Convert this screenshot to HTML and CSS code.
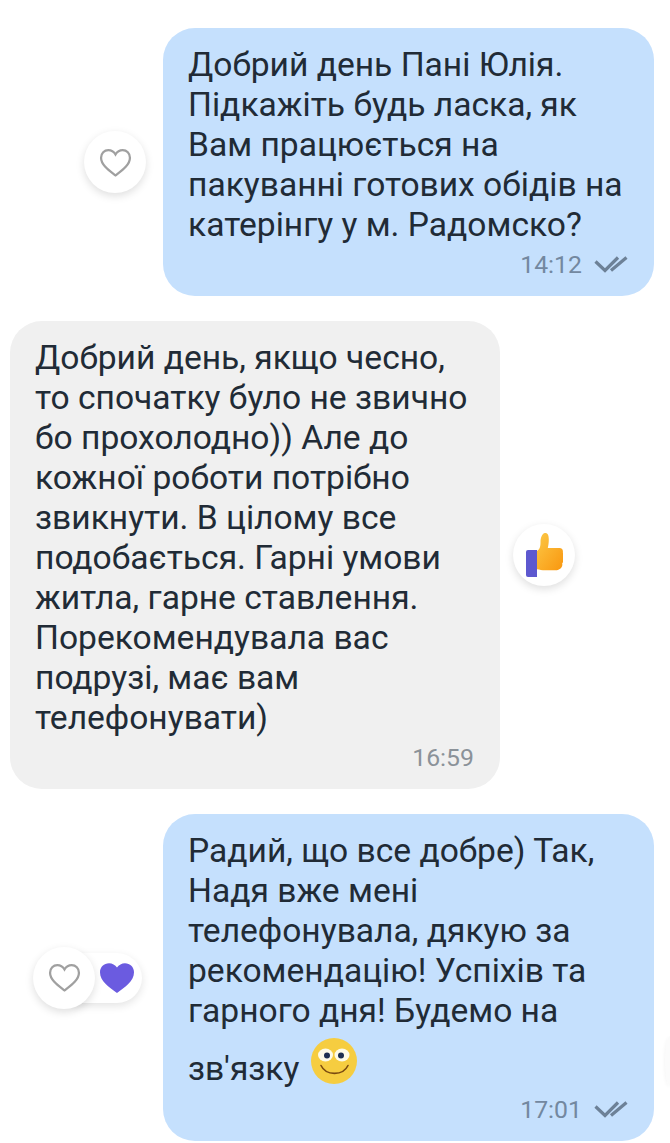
FILE: index.html
```html
<!DOCTYPE html>
<html lang="uk">
<head>
<meta charset="utf-8">
<title>Чат</title>
<link rel="stylesheet" href="styles.css">
</head>
<body>
<main class="chat">
  <div class="row row-out">
    <div class="reactions">
      <button class="react"><svg class="heart-line" viewBox="0 0 32 28"><path d="M16 26.500C9 21 2 16 2 9.300 2 5 5.200 2 9 2c3 0 5.400 1.500 7 4.200C17.600 3.500 20 2 23 2c3.800 0 7 3 7 7.300 0 6.700-7 11.700-14 17.200z"/></svg></button>
    </div>
    <div class="bubble bubble-out">
      <p class="text">Добрий день Пані Юлія.<br>Підкажіть будь ласка, як<br>Вам працюється на<br>пакуванні готових обідів на<br>катерінгу у м. Радомско?</p>
      <div class="meta"><span class="time">14:12</span><svg class="ticks" viewBox="0 0 34 18"><path d="M1.500 6.500L11 15.500 24 2.500M17 15.500L32.500 2.500"/></svg></div>
    </div>
  </div>

  <div class="row row-in">
    <div class="bubble bubble-in">
      <p class="text">Добрий день, якщо чесно,<br>то спочатку було не звично<br>бо прохолодно)) Але до<br>кожної роботи потрібно<br>звикнути. В цілому все<br>подобається. Гарні умови<br>житла, гарне ставлення.<br>Порекомендувала вас<br>подрузі, має вам<br>телефонувати)</p>
      <div class="meta"><span class="time time-in">16:59</span></div>
    </div>
    <div class="reactions">
      <button class="react"><svg class="thumb" viewBox="0 0 37 44">
        <defs><linearGradient id="tg" x1="0" y1="0" x2="1" y2="1"><stop offset="0" stop-color="#fcc846"/><stop offset="1" stop-color="#f9960e"/></linearGradient></defs>
        <path fill="#5d58cf" d="M2 17h9v27H2a2 2 0 0 1-2-2V19a2 2 0 0 1 2-2z"/>
        <path fill="url(#tg)" d="M11 18c3-1.500 3.500-5 3.500-9 0-4 1.500-8.500 4.500-9 3-.3 3.800 3 3.800 6.500 0 3.500-.5 6.500-1 8.500h11.700c2.700 0 3.800 2 3.300 4.500 1.300 1.200 1.500 3.800.2 5.300.9 1.700.8 4-.8 5.200.5 2.500-.3 4.700-2.500 6-1 .9-2.500 1.300-4 1.300H19c-3 0-5.500-.5-8-1z"/>
      </svg></button>
    </div>
  </div>

  <div class="row row-out">
    <div class="reactions reactions-pair">
      <button class="react"><svg class="heart-line" viewBox="0 0 32 28"><path d="M16 26.500C9 21 2 16 2 9.300 2 5 5.200 2 9 2c3 0 5.400 1.500 7 4.200C17.600 3.500 20 2 23 2c3.800 0 7 3 7 7.300 0 6.700-7 11.700-14 17.200z"/></svg></button>
      <span class="pill"><svg class="heart-full" viewBox="0 0 32 28"><path d="M16 28C8.500 22.500 0 17 0 8.500 0 3.500 3.800 0 8.500 0c3 0 5.800 1.500 7.500 4.200C17.700 1.500 20.500 0 23.500 0 28.200 0 32 3.500 32 8.500 32 17 23.500 22.500 16 28z"/></svg></span>
    </div>
    <div class="bubble bubble-out">
      <p class="text">Радий, що все добре) Так,<br>Надя вже мені<br>телефонувала, дякую за<br>рекомендацію! Успіхів та<br>гарного дня! Будемо на</p>
      <p class="text text-emoji">зв'язку <svg class="smile" viewBox="0 0 46 46">
        <circle cx="23" cy="23" r="23" fill="#f6cd40"/>
        <ellipse cx="14.500" cy="17" rx="7.500" ry="6.500" fill="#fdfbe8"/><ellipse cx="31" cy="17" rx="7.500" ry="6.500" fill="#fdfbe8"/>
        <circle cx="16" cy="17.500" r="3" fill="#1d2f50"/><circle cx="30" cy="17.500" r="3" fill="#1d2f50"/>
        <path d="M10 27.500c5 10.500 22 10.500 27 0" fill="none" stroke="#7a4a10" stroke-width="1.600" stroke-linecap="round"/>
      </svg></p>
      <div class="meta"><span class="time">17:01</span><svg class="ticks" viewBox="0 0 34 18"><path d="M1.500 6.500L11 15.500 24 2.500M17 15.500L32.500 2.500"/></svg></div>
    </div>
  </div>
</main>
<span class="edge-shadow"></span>
</body>
</html>
```

FILE: styles.css
```css
html, body {
  margin: 0;
  height: 1143px;
  overflow: hidden;
  background: #fff;
}

.chat {
  display: flex;
  flex-direction: column;
  gap: 25px;
  padding: 28px 16px 2px 10px;
  font-family: Roboto, "Noto Sans", sans-serif;
  color: #212b36;
}

.row {
  display: flex;
  align-items: center;
}

.row-out {
  justify-content: flex-end;
}

.row-in {
  justify-content: flex-start;
}

.bubble {
  box-sizing: border-box;
  width: 491px;
  padding: 17px 25px 0;
  border-radius: 32px;
}

.bubble-out {
  background: #c5e0fd;
}

.bubble-in {
  background: #f0f0f0;
  width: 490px;
}

.text {
  margin: 0;
  font-size: 33.6px;
  line-height: 40px;
  white-space: nowrap;
}

.text-emoji {
  box-sizing: border-box;
  height: 59px;
  padding-top: 7px;
}

.smile {
  width: 46px;
  height: 46px;
  margin-left: 3px;
  vertical-align: -4px;
}

.meta {
  display: flex;
  align-items: center;
  justify-content: flex-end;
  gap: 12px;
  height: 51px;
  box-sizing: border-box;
  padding: 0 1px 13px 0;
}

.time {
  font-size: 24.8px;
  color: #7388a0;
}

.time-in {
  color: #8b9299;
}

.ticks {
  width: 34px;
  height: 18px;
  fill: none;
  stroke: #6d8197;
  stroke-width: 3.2;
}

.reactions {
  display: flex;
  align-items: center;
  margin-right: 17px;
}

.row-in .reactions {
  margin: 0 0 0 13px;
}

.reactions-pair {
  margin-right: 21px;
}

.react {
  display: flex;
  align-items: center;
  justify-content: center;
  position: relative;
  z-index: 1;
  width: 62px;
  height: 62px;
  padding: 0;
  border: 0;
  border-radius: 50%;
  background: #fff;
  box-shadow: 0 3px 9px rgba(0, 0, 0, .13);
}

.heart-line {
  width: 33px;
  height: 29px;
  fill: none;
  stroke: #a0a0a0;
  stroke-width: 2.2;
}

.thumb {
  width: 37px;
  height: 44px;
}

.pill {
  display: flex;
  align-items: center;
  justify-content: flex-end;
  box-sizing: border-box;
  width: 70px;
  height: 50px;
  margin-left: -23px;
  padding-right: 8px;
  border-radius: 0 25px 25px 0;
  background: #fff;
  box-shadow: 0 3px 9px rgba(0, 0, 0, .11);
}

.heart-full {
  width: 34px;
  height: 30px;
  fill: #6b5be0;
}

.edge-shadow {
  position: absolute;
  top: 1036px;
  left: 665px;
  width: 5px;
  height: 50px;
  border-radius: 5px 0 0 5px / 25px 0 0 25px;
  background: #fbfbfb;
  box-shadow: 0 1px 4px rgba(0, 0, 0, .06);
}
```
